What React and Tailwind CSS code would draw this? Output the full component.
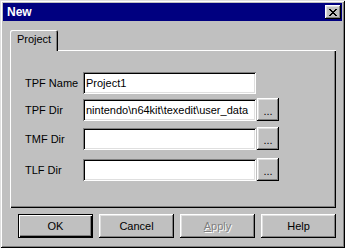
import React from "react";

const font = { fontFamily: '"Liberation Sans", Arial, sans-serif' };

function Input({ value }) {
  return (
    <div className="w-[173px] h-[22px] bg-white shadow-[inset_1px_1px_#808080,inset_-1px_-1px_#ffffff,inset_2px_2px_#000000,inset_-2px_-2px_#dfdfdf] flex items-center pl-[3px] overflow-hidden whitespace-nowrap text-[11px] text-black">
      {value}
    </div>
  );
}

function Dots() {
  return (
    <div className="w-[22px] h-[23px] -mt-[1px] bg-[#c0c0c0] shadow-[inset_-1px_-1px_#000000,inset_1px_1px_#ffffff,inset_-2px_-2px_#808080,inset_2px_2px_#dfdfdf] flex items-center justify-center text-[11px] text-black pt-[4px] leading-none">
      ...
    </div>
  );
}

function Row({ label, value, dots, mt }) {
  return (
    <div className={`flex items-center ${mt}`}>
      <div className="w-[58px] text-[11px] text-black">{label}</div>
      <Input value={value} />
      {dots && <div className="ml-[1px]"><Dots /></div>}
    </div>
  );
}

function Btn({ children, def, disabled }) {
  const cls = def
    ? "shadow-[inset_1px_1px_#000000,inset_-1px_-1px_#000000,inset_2px_2px_#ffffff,inset_-2px_-2px_#000000,inset_-3px_-3px_#808080]"
    : "shadow-[inset_-1px_-1px_#000000,inset_1px_1px_#ffffff,inset_-2px_-2px_#808080,inset_2px_2px_#dfdfdf]";
  return (
    <div className={`w-[75px] h-[24px] bg-[#c0c0c0] flex items-center justify-center text-[11px] ${cls} ${disabled ? "text-[#808080] [text-shadow:1px_1px_#ffffff]" : "text-black"}`}>
      {children}
    </div>
  );
}

export default function App() {
  return (
    <div style={font} className="w-[345px] h-[248px] bg-[#c0c0c0] p-[3px] flex flex-col shadow-[inset_1px_1px_#dfdfdf,inset_-1px_-1px_#000000,inset_2px_2px_#ffffff,inset_-2px_-2px_#808080]">
      <div className="h-[18px] bg-[#000080] flex items-center justify-between pl-[4px] pr-[1px]">
        <span className="text-white font-bold text-[12px] leading-none">New</span>
        <div className="w-[16px] h-[14px] bg-[#c0c0c0] shadow-[inset_-1px_-1px_#000000,inset_1px_1px_#ffffff,inset_-2px_-2px_#808080,inset_2px_2px_#dfdfdf] flex items-center justify-center">
          <svg width="8" height="7" viewBox="0 0 8 7" shapeRendering="crispEdges">
            <path d="M0 0h2v1h-2zM6 0h2v1h-2zM1 1h2v1h-2zM5 1h2v1h-2zM2 2h4v1h-4zM3 3h2v1h-2zM2 4h4v1h-4zM1 5h2v1h-2zM5 5h2v1h-2zM0 6h2v1h-2zM6 6h2v1h-2z" fill="#000" />
          </svg>
        </div>
      </div>
      <div className="pt-[9px] pl-[7px]">
        <div className="relative z-10 w-[48px] h-[21px] bg-[#c0c0c0] rounded-t-[2px] shadow-[inset_1px_1px_#ffffff,inset_-1px_0_#000000,inset_-2px_0_#808080] flex items-center justify-center text-[11px] text-black pb-[2px]">
          Project
        </div>
        <div className="-mt-[1px] w-[326px] h-[158px] bg-[#c0c0c0] shadow-[inset_1px_1px_#ffffff,inset_-1px_-1px_#000000,inset_-2px_-2px_#808080] pl-[15px] pt-[22px]">
          <Row label="TPF Name" value="Project1" mt="" />
          <Row label="TPF Dir" value="nintendo\n64kit\texedit\user_data" dots mt="mt-[5px]" />
          <Row label="TMF Dir" value="" dots mt="mt-[7px]" />
          <Row label="TLF Dir" value="" dots mt="mt-[9px]" />
        </div>
      </div>
      <div className="flex gap-[6px] pl-[15px] mt-[6px]">
        <Btn def>OK</Btn>
        <Btn>Cancel</Btn>
        <Btn disabled><span><span className="underline">A</span>pply</span></Btn>
        <Btn>Help</Btn>
      </div>
    </div>
  );
}
